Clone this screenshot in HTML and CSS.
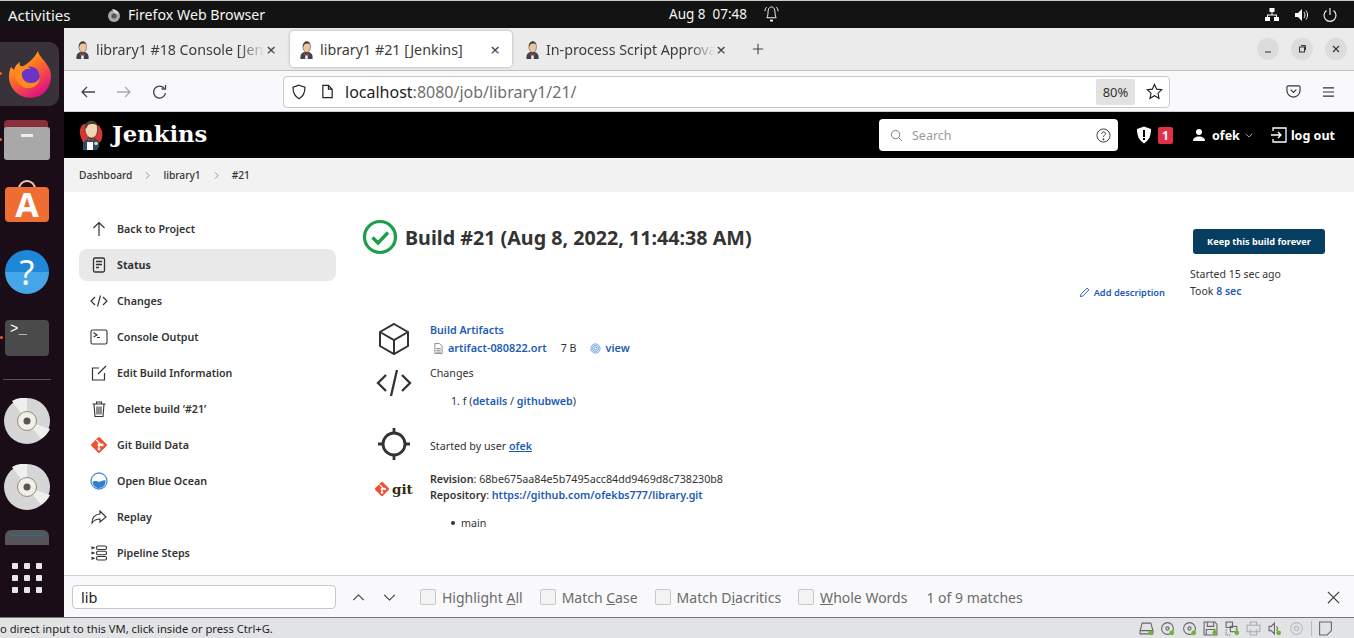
FILE: index.html
```html
<!DOCTYPE html>
<html lang="en">
<head>
<meta charset="utf-8">
<title>library1 #21 [Jenkins]</title>
<link rel="stylesheet" href="styles.css">
</head>
<body>
<svg class="defs" width="0" height="0" aria-hidden="true">
  <defs>
    <symbol id="butler" viewBox="0 0 24 30">
      <path d="M3 20C-1 12 1 6 5 4l14 1c4 3 6 9 3 16l-3 3H5z" fill="#d33833"/>
      <path d="M4 30c-1-6 1-11 8-12 7 0 9 4 8 9l-2 3z" fill="#2f4a63"/>
      <path d="M6 9c0-5 3-8 6.500-8S19 4 18.500 10c-.3 5-2.500 8-6 8S6 14 6 9z" fill="#f0d6b7" stroke="#3a3129" stroke-width=".7"/>
      <path d="M6 9c0-5 3-8 6.500-8 3 0 5 1.500 5.500 4-3-1.500-7-1-9 0-.5 1.500-1.500 3-3 4z" fill="#4b3c30"/>
      <path d="M9.500 18.500l2.500 1.200 2.500-1.200.5 2.500-3-1-3 1z" fill="#d33833"/>
      <rect x="8" y="22" width="6" height="8" fill="#fff"/>
      <circle cx="17" cy="23.500" r="1.800" fill="#f0d6b7"/>
    </symbol>
    <symbol id="favhead" viewBox="0 0 24 30">
      <path d="M2 30c-1-7 2-12 10-12s11 5 10 12z" fill="#3b4450"/>
      <path d="M6 10c0-6 3-9 6.500-9S19 4 18.500 11c-.3 5-2.500 8-6 8S6 15 6 10z" fill="#e9c7a5" stroke="#3a3129" stroke-width=".8"/>
      <path d="M6 10c0-6 3-9 6.500-9 3 0 5 1.500 5.500 4-3-1.500-7-1-9 0-.5 2-1.500 3.500-3 5z" fill="#4b3c30"/>
      <path d="M8 20l4 2 4-2 .5 4-4.500-1.500L7.500 24z" fill="#c9302c"/>
      <rect x="10" y="24" width="4" height="6" fill="#f4f4f4"/>
    </symbol>
    <symbol id="gitmark" viewBox="0 0 20 20">
      <rect x="3.300" y="3.300" width="13.400" height="13.400" rx="1.600" transform="rotate(45 10 10)" fill="#f05133"/>
      <path d="M7 4.500l5.500 5.500M10 10v5M10 10l3.500 0" stroke="#fff" stroke-width="1.400" fill="none"/>
      <circle cx="10" cy="10" r="1.600" fill="#fff"/><circle cx="10" cy="14.500" r="1.600" fill="#fff"/><circle cx="13.500" cy="10" r="1.600" fill="#fff"/>
    </symbol>
    <symbol id="cd" viewBox="0 0 46 46">
      <circle cx="23" cy="23" r="23" fill="#d6d6d6"/>
      <path d="M23 23L8 3a23 23 0 0 1 15-3zM23 23l23 8a23 23 0 0 1-9 10z" fill="#efefef"/>
      <circle cx="23" cy="23" r="9.500" fill="#f3efe6" stroke="#8a8a8a"/>
      <circle cx="23" cy="23" r="3.500" fill="#555"/>
    </symbol>
    <symbol id="vmdisk" viewBox="0 0 14 14">
      <circle cx="7" cy="7" r="5.500" fill="none" stroke="#666"/><circle cx="7" cy="7" r="1.500" fill="none" stroke="#666"/>
      <circle cx="11" cy="11" r="2.200" fill="#6eb52f"/>
    </symbol>
  </defs>
</svg>

<header class="topbar">
  <span class="activities">Activities</span>
  <span class="appname">
    <svg class="appglyph" viewBox="0 0 14 14"><circle cx="7" cy="8" r="6" fill="#aaa"/><circle cx="7" cy="8" r="2.600" fill="#555"/><path d="M5 1c3 0 6 2 7 5L8 5z" fill="#ddd"/></svg>
    Firefox Web Browser
  </span>
  <span class="clock">Aug 8&nbsp; 07:48
    <svg class="bell" viewBox="0 0 16 18" fill="none" stroke="#fff" stroke-width="1"><path d="M3 13c1.500-2 1-5 1.500-8C5 2.500 6.500 1.500 8 1.500S11 2.500 11.500 5c.5 3 0 6 1.500 8z"/><path d="M1 6c0-2 1-3.500 2-4.500M15 6c0-2-1-3.500-2-4.500"/><path d="M6.500 16h3" stroke-width="2"/></svg>
  </span>
  <span class="tray">
    <svg class="tray-i" viewBox="0 0 16 16" fill="#fff"><rect x="5.500" y="1" width="5" height="4"/><rect x="1" y="10" width="5" height="4"/><rect x="10" y="10" width="5" height="4"/><path d="M7.500 5h1v2.500H13V10h-1V8.500H4V10H3V7.500h4.500z"/></svg>
    <svg class="tray-i" viewBox="0 0 16 16" fill="#fff"><path d="M2 6h3l4-4v12l-4-4H2z"/><path d="M11 5c1.300 1.800 1.300 4.200 0 6M13 3.500c2 2.600 2 6.400 0 9" fill="none" stroke="#fff"/></svg>
    <svg class="tray-i" viewBox="0 0 16 16" fill="none" stroke="#fff" stroke-width="1.100"><path d="M8 1v7"/><path d="M4.500 3.500a6 6 0 1 0 7 0"/></svg>
  </span>
</header>

<div class="desktop">
  <nav class="dock" aria-label="Dock">
    <div class="dock-ff running">
      <svg viewBox="0 0 44 48" class="ff" >
        <defs>
          <linearGradient id="ffg" x1="0" y1="0" x2=".6" y2="1"><stop offset="0" stop-color="#ffd23a"/><stop offset=".45" stop-color="#ff7a1f"/><stop offset="1" stop-color="#e3127f"/></linearGradient>
        </defs>
        <path d="M30 1c1 6 9 11 12 19 3 10-1 20-9 25-9 5-22 3-28-6C0 32 0 24 3 17l3 3c1-4 3-6 6-8-1 3 0 4 2 5 5-3 11-7 16-16z" fill="url(#ffg)"/>
        <circle cx="22" cy="26" r="9.500" fill="#6a34c7"/>
        <path d="M7 19c5-4 12-4 16 0-4-1-8 1-9 4-1 5 3 10 9 10 4 0 7-2 9-5-1 7-7 11-14 10C10 36 5 27 7 19z" fill="#ff8a1f"/>
      </svg>
    </div>
    <div class="dock-files running"><span class="files-tab"></span><span class="files-body"><i></i></span></div>
    <div class="dock-store"><span class="store-handle"></span><span class="store-body">A</span></div>
    <div class="dock-help">?</div>
    <div class="dock-term running">&gt;_</div>
    <div class="dock-sep"></div>
    <svg class="dock-cd"><use href="#cd"/></svg>
    <svg class="dock-cd dock-cd2"><use href="#cd"/></svg>
    <div class="dock-drive"><i></i></div>
    <div class="dock-grid"><i></i><i></i><i></i><i></i><i></i><i></i><i></i><i></i><i></i></div>
  </nav>

  <div class="browser">
    <div class="tabstrip">
      <div class="tab">
        <svg class="fav"><use href="#favhead"/></svg>
        <span class="tab-title tab-fade">library1 #18 Console [Jen</span>
        <span class="tab-x">×</span>
      </div>
      <div class="tab tab-active">
        <svg class="fav"><use href="#favhead"/></svg>
        <span class="tab-title">library1 #21 [Jenkins]</span>
        <span class="tab-x">×</span>
      </div>
      <div class="tab">
        <svg class="fav"><use href="#favhead"/></svg>
        <span class="tab-title tab-fade">In-process Script Approva</span>
        <span class="tab-x">×</span>
      </div>
      <svg class="newtab" viewBox="0 0 14 14" fill="none" stroke="#444" stroke-width="1.300"><path d="M7 1v12M1 7h12"/></svg>
      <div class="winctl">
        <span class="winbtn"><svg viewBox="0 0 10 10" stroke="#333" fill="none"><path d="M2 8h6"/></svg></span>
        <span class="winbtn"><svg viewBox="0 0 10 10" stroke="#333" fill="none"><rect x="2.500" y="3" width="5" height="5"/><path d="M4 1.500h4.500V6"/></svg></span>
        <span class="winbtn"><svg viewBox="0 0 10 10" stroke="#333" fill="none" stroke-width="1.100"><path d="M2 2l6 6M8 2l-6 6"/></svg></span>
      </div>
    </div>

    <div class="toolbar">
      <svg class="tb-i" viewBox="0 0 16 16" fill="none" stroke="#444" stroke-width="1.300"><path d="M15 8H2M7 3L2 8l5 5"/></svg>
      <svg class="tb-i tb-dim" viewBox="0 0 16 16" fill="none" stroke="#aaa" stroke-width="1.300"><path d="M1 8h13M9 3l5 5-5 5"/></svg>
      <svg class="tb-i tb-last" viewBox="0 0 16 16" fill="none" stroke="#444" stroke-width="1.300"><path d="M13.500 9a6 6 0 1 1-1.500-5"/><path d="M13.500 1v4h-4" /></svg>
      <div class="urlbar">
        <svg class="url-shield" viewBox="0 0 16 16" fill="none" stroke="#222" stroke-width="1.200"><path d="M8 1.200l6 2c0 5-1.500 9-6 11.500-4.500-2.500-6-6.500-6-11.500z"/></svg>
        <svg class="url-page" viewBox="0 0 14 16" fill="none" stroke="#222" stroke-width="1.300"><path d="M2 1.500h6l4 4v9H2zM8 1.500v4h4"/></svg>
        <span class="url-text"><b>localhost</b>:8080/job/library1/21/</span>
        <span class="zoom-pill">80%</span>
        <svg class="url-star" viewBox="0 0 18 18" fill="none" stroke="#222" stroke-width="1.200"><path d="M9 1.500l2.300 5 5.400.6-4 3.700 1.100 5.400L9 13.500l-4.800 2.700 1.100-5.400-4-3.700 5.400-.6z"/></svg>
      </div>
      <svg class="tb-pocket" viewBox="0 0 16 16" fill="none" stroke="#333" stroke-width="1.200"><path d="M2.500 2h11A1.500 1.500 0 0 1 15 3.500V7A7 7 0 0 1 1 7V3.500A1.500 1.500 0 0 1 2.500 2z"/><path d="M5 6l3 3 3-3"/></svg>
      <svg class="tb-menu" viewBox="0 0 14 12" stroke="#333" stroke-width="1.200"><path d="M1 1.500h12M1 6h12M1 10.500h12"/></svg>
    </div>

    <div class="viewport">
      <header class="jk-head">
        <svg class="jk-logo"><use href="#butler"/></svg>
        <span class="jk-name">Jenkins</span>
        <div class="jk-search">
          <svg class="jk-mag" viewBox="0 0 14 14" fill="none" stroke="#777"><circle cx="6" cy="6" r="4.500"/><path d="M9.500 9.500l3.500 3.500"/></svg>
          <span class="jk-ph">Search</span>
          <svg class="jk-help" viewBox="0 0 16 16" fill="none" stroke="#333"><circle cx="8" cy="8" r="7"/><path d="M6 6.200C6 3.500 10 3.500 10 6c0 1.700-2 1.700-2 3.500"/><circle cx="8" cy="12" r=".6" fill="#333"/></svg>
        </div>
        <svg class="jk-shield" viewBox="0 0 16 18"><path d="M8 .5l7 2.500c0 6-1.500 11-7 14.500C2.500 14 1 9 1 3z" fill="#fff"/><rect x="7" y="4" width="2" height="7" fill="#000"/><rect x="7" y="12" width="2" height="2" fill="#000"/></svg>
        <span class="jk-badge">1</span>
        <svg class="jk-user" viewBox="0 0 14 14" fill="#fff"><circle cx="7" cy="4" r="3"/><path d="M1 13c0-3 2.500-4.500 6-4.500s6 1.500 6 4.500z"/></svg>
        <span class="jk-uname">ofek</span>
        <svg class="jk-caret" viewBox="0 0 10 6" fill="none" stroke="#ccc"><path d="M1 1l4 4 4-4"/></svg>
        <svg class="jk-exit" viewBox="0 0 18 18" fill="none" stroke="#fff" stroke-width="1.300"><path d="M3 5V2h13v14H3v-3"/><path d="M1 9h10M8 6l3 3-3 3"/></svg>
        <span class="jk-logout">log out</span>
      </header>

      <div class="crumbs">
        <span>Dashboard</span>
        <svg class="crumb-sep" viewBox="0 0 6 10" fill="none" stroke="#888"><path d="M1 1l4 4-4 4"/></svg>
        <span>library1</span>
        <svg class="crumb-sep" viewBox="0 0 6 10" fill="none" stroke="#888"><path d="M1 1l4 4-4 4"/></svg>
        <span>#21</span>
      </div>

      <div class="page">
        <aside class="side">
          <a class="side-item"><svg class="side-i" viewBox="0 0 18 18" fill="none" stroke="#333" stroke-width="1.200"><path d="M9 16V3M3.500 8L9 2.500 14.500 8"/></svg>Back to Project</a>
          <a class="side-item side-on"><svg class="side-i" viewBox="0 0 18 18" fill="none" stroke="#333" stroke-width="1.300"><rect x="3.500" y="2" width="11" height="14" rx="1.500"/><path d="M6 5.500h6M6 8.500h6M6 11.500h3"/></svg>Status</a>
          <a class="side-item"><svg class="side-i" viewBox="0 0 18 18" fill="none" stroke="#333" stroke-width="1.200"><path d="M5 5L1 9l4 4M13 5l4 4-4 4M10.500 3.500l-3 11"/></svg>Changes</a>
          <a class="side-item"><svg class="side-i" viewBox="0 0 18 18" fill="none" stroke="#333" stroke-width="1.100"><rect x="1" y="2" width="16" height="14" rx="1.500"/><path d="M3.500 4.500L7 7 3.500 9M7 9.500h3"/></svg>Console Output</a>
          <a class="side-item"><svg class="side-i" viewBox="0 0 18 18" fill="none" stroke="#333" stroke-width="1.200"><path d="M9 4H2.500v12h12V9M8 10l8-8"/></svg>Edit Build Information</a>
          <a class="side-item"><svg class="side-i" viewBox="0 0 18 18" fill="none" stroke="#333" stroke-width="1.100"><path d="M2.500 4h13M6.500 4V2h5v2M4 4l1 12.500h8L14 4M7 6.500v8M9 6.500v8M11 6.500v8"/></svg>Delete build ‘#21’</a>
          <a class="side-item"><svg class="side-i"><use href="#gitmark"/></svg>Git Build Data</a>
          <a class="side-item"><svg class="side-i" viewBox="0 0 18 18"><circle cx="9" cy="9" r="8" fill="#fff" stroke="#4a90d9" stroke-width="1.300"/><path d="M2.500 10c3-2.500 5 .5 8-.5 2-.6 3.500-1.500 5-1 .5 4-2.500 7.500-6.500 7.500-3.500 0-6-2.500-6.500-6z" fill="#2d7fd0"/></svg>Open Blue Ocean</a>
          <a class="side-item"><svg class="side-i" viewBox="0 0 18 18" fill="none" stroke="#333" stroke-width="1.100"><path d="M10 3l6 6-6 5v-3c-4 0-6 1-8 4 0-5 3-8.500 8-9z"/></svg>Replay</a>
          <a class="side-item"><svg class="side-i" viewBox="0 0 18 18" fill="none" stroke="#333" stroke-width="1.100"><rect x="6.500" y="2" width="10" height="3.500" rx="1.500"/><rect x="6.500" y="7.200" width="10" height="3.500" rx="1.500"/><rect x="6.500" y="12.500" width="10" height="3.500" rx="1.500"/><path d="M2 3l2 .8L2 4.600zM2 8.200l2 .8-2 .8zM2 13.500l2 .8-2 .8z" fill="#333"/></svg>Pipeline Steps</a>
        </aside>

        <main class="content">
          <div class="titlerow">
            <svg class="okmark" viewBox="0 0 36 36"><circle cx="18" cy="18" r="15.500" fill="none" stroke="#1e9e4a" stroke-width="3.200"/><path d="M10.500 18.500l5.500 5.500 10-10.500" fill="none" stroke="#1e9e4a" stroke-width="3.400"/></svg>
            <h1 class="title">Build #21 (Aug 8, 2022, 11:44:38 AM)</h1>
          </div>
          <a class="adddesc"><svg class="pencil" viewBox="0 0 12 12" fill="none" stroke="#1c5bb5"><path d="M1.500 10.500l.6-2.600L8.800 1.200l2 2-6.700 6.700z"/></svg>Add description</a>

          <section class="rows">
            <div class="row row-art">
              <svg class="row-i" viewBox="0 0 36 36" fill="none" stroke="#333" stroke-width="2"><path d="M18 3l14 8v14l-14 8-14-8V11zM4 11l14 8 14-8M18 19v14"/></svg>
              <div class="row-body">
                <a class="lnk">Build Artifacts</a>
                <div class="artline">
                  <svg class="doc" viewBox="0 0 10 12" fill="none" stroke="#666" stroke-width=".8"><path d="M1 .5h5l3 3v8H1zM2.500 6h5M2.500 8h5M2.500 10h5"/></svg>
                  <a class="lnk">artifact-080822.ort</a>
                  <span class="size">7 B</span>
                  <svg class="finger" viewBox="0 0 12 12" fill="none" stroke="#3a7fd0" stroke-width=".8"><circle cx="6" cy="6" r="5"/><circle cx="6" cy="6" r="3.300"/><circle cx="6" cy="6" r="1.600"/></svg>
                  <a class="lnk">view</a>
                </div>
              </div>
            </div>
            <div class="row row-chg">
              <svg class="row-i" viewBox="0 0 36 36" fill="none" stroke="#333" stroke-width="2.300"><path d="M10 10L2 18l8 8M26 10l8 8-8 8M21 5l-6 26"/></svg>
              <div class="row-body">
                <div class="plain">Changes</div>
                <div class="chg-item">1. f (<a class="lnk">details</a> / <a class="lnk">githubweb</a>)</div>
              </div>
            </div>
            <div class="row row-usr">
              <svg class="row-i" viewBox="0 0 36 36" fill="none" stroke="#333" stroke-width="2.800"><circle cx="18" cy="18" r="11"/><path d="M18 2v5M18 29v5M2 18h5M29 18h5"/></svg>
              <div class="row-body plain">Started by user <a class="lnk ul">ofek</a></div>
            </div>
            <div class="row row-git">
              <span class="gitlogo"><svg class="gitmark"><use href="#gitmark"/></svg><b>git</b></span>
              <div class="row-body">
                <div class="plain"><b class="sb">Revision</b>: 68be675aa84e5b7495acc84dd9469d8c738230b8</div>
                <div class="plain"><b class="sb">Repository</b>: <a class="lnk">https://github.com/ofekbs777/library.git</a></div>
                <div class="branch"><i></i>main</div>
              </div>
            </div>
          </section>
        </main>

        <aside class="meta">
          <button class="keep" type="button">Keep this build forever</button>
          <div class="meta-t">Started 15 sec ago</div>
          <div class="meta-t">Took <a class="lnk">8 sec</a></div>
        </aside>
      </div>
    </div>

    <div class="findbar">
      <span class="find-input">lib</span>
      <svg class="find-arrow" viewBox="0 0 14 8" fill="none" stroke="#333" stroke-width="1.200"><path d="M1 7l6-6 6 6"/></svg>
      <svg class="find-arrow" viewBox="0 0 14 8" fill="none" stroke="#333" stroke-width="1.200"><path d="M1 1l6 6 6-6"/></svg>
      <label class="find-opt find-first"><i></i><span>Highlight <u>A</u>ll</span></label>
      <label class="find-opt"><i></i><span>Match <u>C</u>ase</span></label>
      <label class="find-opt"><i></i><span>Match D<u>i</u>acritics</span></label>
      <label class="find-opt"><i></i><span><u>W</u>hole Words</span></label>
      <span class="find-count">1 of 9 matches</span>
      <svg class="find-x" viewBox="0 0 14 14" fill="none" stroke="#333" stroke-width="1.200"><path d="M1 1l12 12M13 1L1 13"/></svg>
    </div>
  </div>
</div>

<footer class="vmbar">
  <span class="vm-msg">o direct input to this VM, click inside or press Ctrl+G.</span>
  <span class="vm-icons">
    <svg class="vm-i" viewBox="0 0 14 14" fill="none" stroke="#666"><path d="M3 2h8l2 7v3H1V9zM1 9h12"/><circle cx="11" cy="11" r="2.200" fill="#6eb52f" stroke="none"/></svg>
    <svg class="vm-i"><use href="#vmdisk"/></svg>
    <svg class="vm-i"><use href="#vmdisk"/></svg>
    <svg class="vm-i" viewBox="0 0 14 14" fill="none" stroke="#666"><path d="M1 1h10l2 2v10H1zM4 1v4h6V1M3 13V8h8v5"/><circle cx="11" cy="11" r="2.200" fill="#6eb52f" stroke="none"/></svg>
    <svg class="vm-i" viewBox="0 0 14 14" fill="none" stroke="#666"><rect x="1" y="1" width="6" height="5"/><rect x="5" y="5" width="6" height="5"/><path d="M1 8v5h5" stroke-dasharray="1 1"/><circle cx="11" cy="11" r="2.200" fill="#6eb52f" stroke="none"/></svg>
    <svg class="vm-i" viewBox="0 0 14 14" fill="none" stroke="#aaa"><path d="M4 4V1h6v3M1 4h12v6H1zM4 8v5h6V8"/></svg>
    <svg class="vm-i" viewBox="0 0 14 14" fill="none" stroke="#666"><path d="M1 5h2l3-3v10L3 9H1zM8 5c1 1 1 3 0 4"/><circle cx="10" cy="11" r="2.200" fill="#6eb52f" stroke="none"/></svg>
    <svg class="vm-i" viewBox="0 0 14 14" fill="none" stroke="#bbb"><circle cx="7" cy="7" r="5.500"/><circle cx="7" cy="7" r="2"/></svg>
    <span class="vm-sep"></span>
    <svg class="vm-i" viewBox="0 0 14 14" fill="none" stroke="#666"><path d="M1.500 1h11v8l-4 4h-7z"/></svg>
  </span>
</footer>
</body>
</html>
```

FILE: styles.css
```css
* { box-sizing: border-box; }
html, body { margin: 0; height: 100%; }
body {
  width: 1354px; height: 638px; overflow: hidden;
  display: flex; flex-direction: column;
  font-family: "Noto Sans", "Open Sans", sans-serif;
  color: #333; background: #fff;
}
.defs { position: absolute; }
svg { display: block; flex: none; }

/* GNOME top bar */
.topbar {
  height: 28px; flex: none; background: #131313; color: #f4f4f4;
  border-top: 1px solid #c9c9c9;
  display: flex; align-items: center; font-size: 14.200px; position: relative;
}
.activities { margin-left: 8px; width: 99px; font-size: 15px; }
.appname { display: flex; align-items: center; gap: 7px; }
.appglyph { width: 14px; height: 14px; }
.clock { position: absolute; left: 669px; top: 4px; display: flex; align-items: center; gap: 17px; white-space: nowrap; font-size: 13.500px; }
.bell { width: 15px; height: 18px; }
.tray { margin-left: auto; margin-right: 16px; display: flex; gap: 13px; }
.tray-i { width: 16px; height: 16px; }

.desktop { flex: 1; display: flex; min-height: 0; }

/* Dock */
.dock { width: 64px; flex: none; background: #1a0d18; padding-top: 14px; overflow: hidden; display: flex; flex-direction: column; align-items: flex-start; }
.running { position: relative; }
.running::before { content: ""; position: absolute; left: -5px; top: 50%; width: 3px; height: 3px; margin-top: -2px; border-radius: 50%; background: #e9622c; }
.dock-ff.running::before { left: -1px; }
.dock-ff { width: 59px; height: 64px; background: #3a323a; border-radius: 0 10px 10px 0; display: flex; align-items: center; justify-content: center; }
.ff { width: 44px; height: 48px; margin-left: 1px; }
.dock-files { margin: 14px 0 0 4px; width: 46px; height: 40px; }
.files-tab { display: block; width: 44px; height: 18px; background: #8c2f3d; border-radius: 4px 4px 0 0; position: absolute; left: 0; top: 0; }
.files-body { display: block; position: absolute; left: 0; top: 7px; width: 46px; height: 33px; background: #a8a8a8; border-radius: 3px; }
.files-body i { display: block; width: 12px; height: 3px; background: #eee; margin: 7px auto 0; }
.dock-store { margin: 20px 0 0 5px; width: 44px; height: 44px; position: relative; }
.store-handle { position: absolute; left: 13px; top: 0; width: 18px; height: 12px; border: 2px solid #f2c8ad; border-bottom: 0; border-radius: 9px 9px 0 0; }
.store-body { position: absolute; left: 0; top: 7px; width: 44px; height: 35px; background: #ef6d32; border-radius: 4px; color: #fff; font-weight: 700; font-size: 34px; line-height: 35px; text-align: center; }
.dock-help { margin: 26px 0 0 5px; width: 44px; height: 44px; border-radius: 50%; background: linear-gradient(#1f87d8 50%, #45a5e6 50%); color: #fff; font-size: 34px; line-height: 44px; text-align: center; }
.dock-term { margin: 26px 0 0 5px; width: 44px; height: 36px; border-radius: 4px; background: #4a4a4a; color: #fff; font-family: "Liberation Mono", monospace; font-size: 14px; line-height: 16px; padding: 1px 0 0 5px; }
.dock-sep { margin: 23px 0 0 3px; width: 48px; height: 1px; background: #5b4f59; }
.dock-cd { margin: 18px 0 0 4px; width: 46px; height: 46px; }
.dock-cd2 { margin-top: 20px; }
.dock-drive { margin: 20px 0 0 5px; width: 44px; height: 15px; background: #55555a; border-radius: 6px 6px 0 0; padding: 5px 6px 0; }
.dock-drive i { display: block; height: 1px; background: #2a6d95; }
.dock-grid { margin: 18px 0 0 12px; display: grid; grid-template-columns: repeat(3, 6px); gap: 6px; }
.dock-grid i { width: 6px; height: 6px; border-radius: 1px; background: #e9e6e9; }

/* Firefox chrome */
.browser { flex: 1; min-width: 0; display: flex; flex-direction: column; }
.tabstrip { height: 43px; flex: none; background: #ebebeb; border-bottom: 1px solid #c2c2c2; display: flex; align-items: center; padding-left: 3px; font-size: 14.300px; color: #3c3c3c; }
.tab { width: 220px; height: 36px; margin-right: 3px; padding: 1px 10px 0 8px; display: flex; align-items: center; border-radius: 4px; }
.tab-active { width: 222px; margin-right: 5px; background: #fff; box-shadow: 0 0 3px rgba(0,0,0,.3); padding-left: 9px; padding-right: 11px; }
.fav { width: 15px; height: 18px; margin-right: 6px; }
.tab-title { flex: 1; overflow: hidden; white-space: nowrap; min-width: 0; }
.tab-fade { letter-spacing: -.05px; -webkit-mask-image: linear-gradient(90deg, #000 85%, transparent); mask-image: linear-gradient(90deg, #000 85%, transparent); }
.tab-x { width: 12px; color: #444; font-size: 17px; line-height: 17px; text-align: center; }
.newtab { width: 12px; height: 12px; margin-left: 12px; }
.winctl { margin-left: auto; margin-right: 7px; display: flex; gap: 12px; }
.winbtn { width: 22px; height: 22px; border-radius: 50%; background: #dcdcdc; display: flex; align-items: center; justify-content: center; }
.winbtn svg { width: 10px; height: 10px; }

.toolbar { height: 41px; flex: none; background: #f9f9fb; border-bottom: 1px solid #cfcfcf; display: flex; align-items: center; padding: 1px 0 0 16px; }
.tb-i { width: 16px; height: 16px; margin-right: 20px; }
.tb-last { margin-right: 0; }
.urlbar { margin-left: 115px; width: 887px; height: 32px; background: #fff; border: 1px solid #c8c8c8; border-radius: 4px; display: flex; align-items: center; padding-left: 7px; font-size: 16px; }
.url-shield { width: 16px; height: 16px; margin-right: 14px; }
.url-page { width: 13px; height: 15px; margin-right: 11px; }
.url-text { flex: 1; color: #6f6f6f; white-space: nowrap; }
.url-text b { color: #1c1c1c; font-weight: 400; }
.zoom-pill { width: 39px; height: 26px; background: #e2e2e2; border-radius: 2px; font-size: 13px; line-height: 26px; text-align: center; color: #333; }
.url-star { width: 17px; height: 17px; margin: 0 6px 0 11px; }
.tb-pocket { width: 15px; height: 15px; margin-left: 116px; }
.tb-menu { width: 13px; height: 12px; margin-left: 21px; }

.viewport { flex: 1; min-height: 0; overflow: hidden; background: #fff; }
.jk-head { height: 46px; background: #000; color: #fff; display: flex; align-items: center; padding-left: 15px; font-size: 12.500px; font-weight: 700; }
.jk-logo { width: 24px; height: 30px; }
.jk-name { margin-left: 9px; padding-bottom: 2px; font-family: "DejaVu Serif", serif; font-size: 22.700px; font-weight: 700; width: 767px; }
.jk-search { width: 239px; height: 32px; background: #fff; border-radius: 4px; display: flex; align-items: center; padding-left: 11px; }
.jk-mag { width: 13px; height: 13px; }
.jk-ph { flex: 1; margin-left: 9px; color: #9a9aa0; font-weight: 400; font-size: 12.500px; }
.jk-help { width: 15px; height: 15px; margin-right: 7px; }
.jk-shield { width: 16px; height: 18px; margin-left: 18px; }
.jk-badge { width: 15px; height: 17px; margin-left: 6px; background: #e0304a; border-radius: 2px; text-align: center; line-height: 17px; font-size: 12px; }
.jk-user { width: 14px; height: 14px; margin-left: 19px; }
.jk-uname { margin-left: 6px; }
.jk-caret { width: 8px; height: 5px; margin-left: 5px; }
.jk-exit { width: 18px; height: 18px; margin-left: 17px; }
.jk-logout { margin-left: 3px; }

.crumbs { height: 34px; background: #f2f2f2; display: flex; align-items: center; padding-left: 15px; font-size: 10.200px; font-weight: 500; color: #333; }
.crumb-sep { width: 5px; height: 9px; margin: 0 13px; }

.page { display: flex; align-items: flex-start; padding: 21px 0 0 15px; font-size: 10.700px; }
.side { width: 257px; flex: none; }
.side-item { height: 32px; margin-bottom: 4px; display: flex; align-items: center; padding-left: 11px; border-radius: 8px; font-weight: 600; color: #333; white-space: nowrap; }
.side-on { background: #e9e9e9; font-weight: 700; }
.side-i { width: 18px; height: 18px; margin-right: 9px; }

.content { width: 800px; flex: none; margin-left: 26px; position: relative; }
.titlerow { display: flex; align-items: center; margin-top: 6px; }
.okmark { width: 36px; height: 36px; }
.title { margin: 0 0 0 7px; font-size: 19.700px; font-weight: 700; color: #333; white-space: nowrap; }
.adddesc { position: absolute; right: -3px; top: 73px; display: flex; align-items: center; gap: 4px; color: #1c5bb5; font-weight: 600; font-size: 9.300px; white-space: nowrap; }
.pencil { width: 11px; height: 11px; }
.rows { margin-top: 67px; }
.row { display: flex; align-items: flex-start; }
.row-i { width: 36px; height: 36px; margin: -1px 0 0 14px; }
.row-body { margin-left: 18px; line-height: 16px; }
.row-art { height: 43px; }
.row-chg { height: 60px; }
.row-chg .row-i { margin-top: 0; }
.row-usr { height: 41px; align-items: center; }
.row-usr .row-i { margin-top: -4px; }
.lnk { color: #1c5bb5; font-weight: 600; }
.ul { text-decoration: underline; }
.plain { color: #333; }
.artline { display: flex; align-items: center; margin: 2px 0 0 4px; height: 16px; }
.artline .lnk { font-size: 10.900px; }
.doc { width: 9px; height: 11px; margin-right: 5px; }
.size { margin: 0 14px; }
.finger { width: 11px; height: 11px; margin-right: 4px; }
.chg-item { margin: 12px 0 0 21px; }
.sb { font-weight: 600; }
.gitlogo { width: 40px; margin: 8px 0 0 12px; height: 20px; display: flex; align-items: center; gap: 2px; color: #33290f; }
.gitlogo b { font-family: "DejaVu Serif", serif; font-size: 13.500px; line-height: 16px; }
.gitmark { width: 16px; height: 16px; }
.row-git { padding-top: 5px; }
.row-git .row-body { margin-left: 16px; }
.branch { display: flex; align-items: center; margin: 12px 0 0 21px; color: #333; }
.branch i { width: 4px; height: 4px; border-radius: 50%; background: #333; margin-right: 6px; }

.meta { margin-left: 31px; padding-top: 16px; width: 140px; }
.keep { display: block; width: 132px; height: 25px; margin: 0 0 12px 0; background: #063e61; border: 0; border-radius: 3px; color: #fff; font: 700 9.200px "Noto Sans", sans-serif; }
.meta-t { line-height: 17px; margin-left: -3px; font-size: 10.500px; }

/* Find bar */
.findbar { height: 42px; flex: none; background: #f9f9fb; border-top: 1px solid #cfcfcf; display: flex; align-items: center; padding: 1px 0 0 8px; font-size: 14px; color: #6b6b6b; }
.find-input { width: 264px; height: 24px; background: #fff; border: 1px solid #c8c8c8; border-radius: 4px; padding-left: 8px; line-height: 22px; color: #222; font-size: 14.500px; }
.find-arrow { width: 13px; height: 7px; margin-left: 16px; }
.find-arrow + .find-arrow { margin-left: 18px; }
.find-opt { display: flex; align-items: center; margin-left: 17px; white-space: nowrap; }
.find-first { margin-left: 24px; }
.find-opt i { width: 16px; height: 16px; background: #f3f3f3; border: 1px solid #c8c8c8; border-radius: 2px; margin-right: 6px; }
.find-count { margin-left: 19px; white-space: nowrap; }
.find-x { width: 13px; height: 13px; margin-left: auto; margin-right: 14px; }

/* VirtualBox status bar */
.vmbar { height: 21px; flex: none; background: #e2e3e5; border-top: 1px solid #777; display: flex; align-items: center; font-size: 11.200px; color: #222; }
.vm-msg { white-space: nowrap; }
.vm-icons { margin-left: auto; margin-right: 21px; display: flex; align-items: center; gap: 6.500px; }
.vm-i { width: 15px; height: 15px; }
.vm-sep { width: 1px; height: 15px; background: #bbb; }
```
